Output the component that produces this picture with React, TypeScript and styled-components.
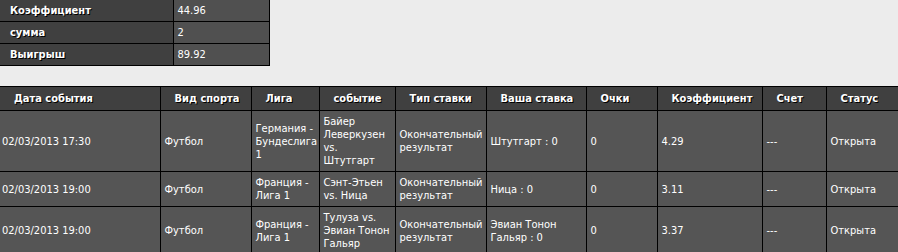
import React from "react";
import styled, { createGlobalStyle } from "styled-components";

const GlobalStyle = createGlobalStyle`
  html, body {
    margin: 0;
    padding: 0;
    background: #ececec;
  }
  body {
    font-family: "DejaVu Sans Condensed", "DejaVu Sans", sans-serif;
    font-stretch: semi-condensed;
    font-size: 11px;
    color: #ffffff;
  }
`;

const Page = styled.div`
  display: flex;
  flex-direction: column;
  gap: 20px;
  width: 898px;
`;

const SummaryTable = styled.table`
  border-collapse: collapse;
  width: 269px;
  table-layout: fixed;
`;

const SummaryLabel = styled.th`
  background: #404040;
  text-align: left;
  font-weight: bold;
  text-shadow: 1px 1px 0 #000;
  padding: 4px 4px 4px 10px;
  line-height: 13px;
  border: 1px solid #000;
  border-left: none;
  border-top: none;
`;

const SummaryValue = styled.td`
  background: #505050;
  padding: 4px;
  line-height: 13px;
  border: 1px solid #000;
  border-top: none;
`;

const BetsTable = styled.table`
  border-collapse: collapse;
  width: 898px;
  table-layout: fixed;
  border-top: 1px solid #000;
`;

const HeadCell = styled.th`
  background: #404040;
  text-align: left;
  font-weight: bold;
  text-shadow: 1px 1px 0 #000;
  padding: 5px 2px 5px 14px;
  line-height: 13px;
  white-space: nowrap;
  border: 1px solid #000;
  &:first-child {
    border-left: none;
  }
`;

const Cell = styled.td`
  background: #555555;
  text-align: left;
  vertical-align: middle;
  padding: 4px 3px 4px 4px;
  line-height: 13px;
  border: 1px solid #000;
  &:first-child {
    border-left: none;
    padding-left: 2px;
  }
`;

const summary = [
  { label: "Коэффициент", value: "44.96" },
  { label: "сумма", value: "2" },
  { label: "Выигрыш", value: "89.92" },
];

const columns = [
  { title: "Дата события", width: 160 },
  { title: "Вид спорта", width: 91 },
  { title: "Лига", width: 68 },
  { title: "событие", width: 76 },
  { title: "Тип ставки", width: 91 },
  { title: "Ваша ставка", width: 100 },
  { title: "Очки", width: 71 },
  { title: "Коэффициент", width: 105 },
  { title: "Счет", width: 64 },
  { title: "Статус", width: 72 },
];

const bets = [
  {
    date: "02/03/2013 17:30",
    sport: "Футбол",
    league: "Германия - Бундеслига 1",
    event: "Байер Леверкузен vs. Штутгарт",
    type: "Окончательный результат",
    pick: "Штутгарт : 0",
    points: "0",
    odds: "4.29",
    score: "---",
    status: "Открыта",
  },
  {
    date: "02/03/2013 19:00",
    sport: "Футбол",
    league: "Франция - Лига 1",
    event: "Сэнт-Этьен vs. Ница",
    type: "Окончательный результат",
    pick: "Ница : 0",
    points: "0",
    odds: "3.11",
    score: "---",
    status: "Открыта",
  },
  {
    date: "02/03/2013 19:00",
    sport: "Футбол",
    league: "Франция - Лига 1",
    event: "Тулуза vs. Эвиан Тонон Гальяр",
    type: "Окончательный результат",
    pick: "Эвиан Тонон Гальяр : 0",
    points: "0",
    odds: "3.37",
    score: "---",
    status: "Открыта",
  },
];

export default function App() {
  return (
    <>
      <GlobalStyle />
      <Page>
        <SummaryTable>
          <colgroup>
            <col style={{ width: 173 }} />
            <col style={{ width: 96 }} />
          </colgroup>
          <tbody>
            {summary.map((row) => (
              <tr key={row.label}>
                <SummaryLabel>{row.label}</SummaryLabel>
                <SummaryValue>{row.value}</SummaryValue>
              </tr>
            ))}
          </tbody>
        </SummaryTable>
        <BetsTable>
          <colgroup>
            {columns.map((c) => (
              <col key={c.title} style={{ width: c.width }} />
            ))}
          </colgroup>
          <thead>
            <tr>
              {columns.map((c) => (
                <HeadCell key={c.title}>{c.title}</HeadCell>
              ))}
            </tr>
          </thead>
          <tbody>
            {bets.map((b, i) => (
              <tr key={i}>
                <Cell>{b.date}</Cell>
                <Cell>{b.sport}</Cell>
                <Cell>{b.league}</Cell>
                <Cell>{b.event}</Cell>
                <Cell>{b.type}</Cell>
                <Cell>{b.pick}</Cell>
                <Cell>{b.points}</Cell>
                <Cell>{b.odds}</Cell>
                <Cell>{b.score}</Cell>
                <Cell>{b.status}</Cell>
              </tr>
            ))}
          </tbody>
        </BetsTable>
      </Page>
    </>
  );
}
